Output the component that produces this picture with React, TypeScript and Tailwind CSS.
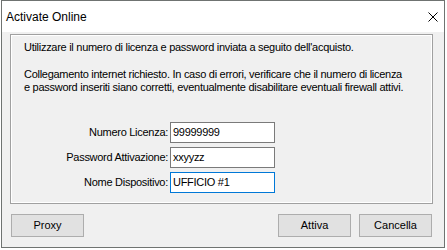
import type React from "react";

type Field = {
  label: string;
  value: string;
  focused?: boolean;
};

const fields: Field[] = [
  { label: "Numero Licenza:", value: "99999999" },
  { label: "Password Attivazione:", value: "xxyyzz" },
  { label: "Nome Dispositivo:", value: "UFFICIO #1", focused: true },
];

const font = { fontFamily: '"Segoe UI", "Liberation Sans", Arial, sans-serif' };

const Button: React.FC<{ label: string }> = ({ label }) => (
  <button className="h-[23px] w-[73px] border border-[#adadad] bg-[#e1e1e1] text-[11px] leading-none text-black">
    {label}
  </button>
);

const App: React.FC = () => {
  return (
    <div className="h-[250px] w-[447px] bg-white pl-[1px]" style={font}>
      <div className="flex h-[248px] w-[444px] flex-col border border-[#6f7371] bg-[#f0f0f0]">
        <div className="flex h-[31px] items-center justify-between bg-white pl-[4px] pr-[6px]">
          <span className="text-[12px] text-black">Activate Online</span>
          <svg width="10" height="10" viewBox="0 0 10 10">
            <path d="M0.5 0.5 L9.5 9.5 M9.5 0.5 L0.5 9.5" stroke="#000" strokeWidth="1" fill="none" />
          </svg>
        </div>

        <div className="px-[8px] pt-[2px]">
          <div className="h-[170px] w-[423px] border border-[#a0a0a0]">
            <div className="h-full border border-white px-[12px] pt-[5px] text-[11px] leading-[13px] tracking-[-0.28px] text-black">
              <p className="whitespace-nowrap">
                Utilizzare il numero di licenza e password inviata a seguito dell'acquisto.
              </p>
              <p className="mt-[14px] whitespace-nowrap">
                Collegamento internet richiesto. In caso di errori, verificare che il numero di licenza
                <br />e password inseriti siano corretti, eventualmente disabilitare eventuali firewall attivi.
              </p>

              <div className="mt-[28px] flex flex-col gap-[4px]">
                {fields.map((f) => (
                  <div key={f.label} className="flex h-[21px] items-center">
                    <span className="w-[146px] whitespace-nowrap pr-[2px] text-right">{f.label}</span>
                    <div
                      className={`flex h-[21px] w-[105px] items-center border bg-white px-[2px] ${
                        f.focused ? "border-[#0078d7]" : "border-[#7a7a7a]"
                      }`}
                    >
                      {f.value}
                    </div>
                  </div>
                ))}
              </div>
            </div>
          </div>

          <div className="mt-[10px] flex items-center pl-[1px] pr-[4px]">
            <Button label="Proxy" />
            <div className="flex-1" />
            <Button label="Attiva" />
            <div className="w-[8px]" />
            <Button label="Cancella" />
          </div>
        </div>
      </div>
    </div>
  );
};

export default App;
